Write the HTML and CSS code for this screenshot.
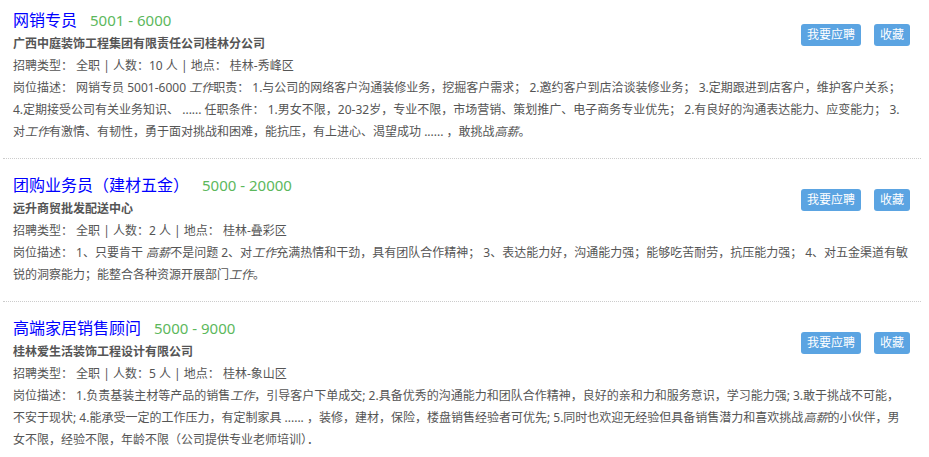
FILE: index.html
```html
<!DOCTYPE html>
<html lang="zh-CN">
<head>
    <meta charset="UTF-8">
    <meta name="viewport" content="width=device-width, initial-scale=1.0">
    <title>职位列表</title>
    <link rel="stylesheet" href="styles.css">
</head>
<body>
    <div class="job-list">

        <div class="job">
            <div class="job-head">
                <div class="job-main">
                    <div class="job-title">
                        <a class="job-name" href="#">网销专员</a>
                        <span class="job-salary">5001 - 6000</span>
                    </div>
                    <div class="company">广西中庭装饰工程集团有限责任公司桂林分公司</div>
                    <div class="info">招聘类型： 全职 | 人数：10 人 | 地点： 桂林-秀峰区</div>
                </div>
                <div class="actions">
                    <button class="btn">我要应聘</button>
                    <button class="btn">收藏</button>
                </div>
            </div>
            <div class="desc">岗位描述： 网销专员 5001-6000 <em>工作</em>职责： 1.与公司的网络客户沟通装修业务，挖掘客户需求； 2.邀约客户到店洽谈装修业务； 3.定期跟进到店客户，维护客户关系； 4.定期接受公司有关业务知识、 ...... 任职条件： 1.男女不限，20-32岁，专业不限，市场营销、策划推广、电子商务专业优先； 2.有良好的沟通表达能力、应变能力； 3.对<em>工作</em>有激情、有韧性，勇于面对挑战和困难，能抗压，有上进心、渴望成功 ...... ，敢挑战<em>高薪</em>。</div>
        </div>

        <div class="job">
            <div class="job-head">
                <div class="job-main">
                    <div class="job-title">
                        <a class="job-name" href="#">团购业务员（建材五金）</a>
                        <span class="job-salary">5000 - 20000</span>
                    </div>
                    <div class="company">远升商贸批发配送中心</div>
                    <div class="info">招聘类型： 全职 | 人数：2 人 | 地点： 桂林-叠彩区</div>
                </div>
                <div class="actions">
                    <button class="btn">我要应聘</button>
                    <button class="btn">收藏</button>
                </div>
            </div>
            <div class="desc">岗位描述： 1、只要肯干 <em>高薪</em>不是问题 2、对<em>工作</em>充满热情和干劲，具有团队合作精神； 3、表达能力好，沟通能力强；能够吃苦耐劳，抗压能力强； 4、对五金渠道有敏锐的洞察能力；能整合各种资源开展部门<em>工作</em>。</div>
        </div>

        <div class="job">
            <div class="job-head">
                <div class="job-main">
                    <div class="job-title">
                        <a class="job-name" href="#">高端家居销售顾问</a>
                        <span class="job-salary">5000 - 9000</span>
                    </div>
                    <div class="company">桂林爱生活装饰工程设计有限公司</div>
                    <div class="info">招聘类型： 全职 | 人数：5 人 | 地点： 桂林-象山区</div>
                </div>
                <div class="actions">
                    <button class="btn">我要应聘</button>
                    <button class="btn">收藏</button>
                </div>
            </div>
            <div class="desc">岗位描述： 1.负责基装主材等产品的销售<em>工作</em>，引导客户下单成交; 2.具备优秀的沟通能力和团队合作精神，良好的亲和力和服务意识，学习能力强; 3.敢于挑战不可能，不安于现状; 4.能承受一定的工作压力，有定制家具 ...... ，装修，建材，保险，楼盘销售经验者可优先; 5.同时也欢迎无经验但具备销售潜力和喜欢挑战<em>高薪</em>的小伙伴，男女不限，经验不限，年龄不限（公司提供专业老师培训）．</div>
        </div>

    </div>
</body>
</html>
```

FILE: styles.css
```css
body {
    margin: 0;
    font-family: "Noto Sans", "Noto Sans CJK SC", sans-serif;
    font-size: 12px;
    color: #555;
    background-color: #fff;
}

/* List */
.job-list {
    padding: 0 8px 0 3px;
}

.job {
    padding: 14px 11px 15px 10px;
    border-bottom: 1px dotted #ccc;
}

.job:first-child {
    padding-top: 8px;
}

/* Title row + buttons */
.job-head {
    display: flex;
    justify-content: space-between;
    align-items: flex-start;
}

.job-title {
    display: flex;
    align-items: baseline;
    height: 25px;
    line-height: 25px;
}

.job-name {
    font-size: 16px;
    color: #00f;
    text-decoration: none;
}

.job-salary {
    font-size: 15px;
    color: #5cb85c;
    margin-left: 13px;
}

.company {
    font-weight: bold;
    line-height: 22px;
}

.info,
.desc {
    line-height: 22px;
}

.desc em {
    font-style: italic;
}

/* Buttons */
.actions {
    display: flex;
    gap: 13px;
    margin-top: 16px;
}

.btn {
    height: 22px;
    padding: 0 6px;
    border: none;
    border-radius: 3px;
    background-color: #5ba4e2;
    color: #fff;
    font-family: inherit;
    font-size: 12px;
    line-height: 22px;
    cursor: pointer;
}
```
